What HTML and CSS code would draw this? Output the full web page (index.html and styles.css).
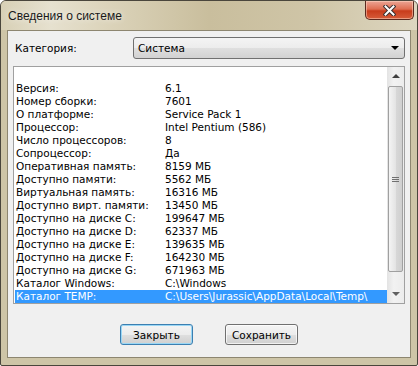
FILE: index.html
```html
<!DOCTYPE html>
<html lang="ru">
<head>
    <meta charset="UTF-8">
    <title>Сведения о системе</title>
    <link rel="stylesheet" href="styles.css">
</head>
<body>
    <div class="window">
        <div class="title-bar">
            <span class="title">Сведения о системе</span>
            <button class="close-button" aria-label="Закрыть">
                <svg width="13" height="11" viewBox="0 0 13 11">
                    <path d="M2.5 1.5 L10.5 9.5 M10.5 1.5 L2.5 9.5" stroke="#3a3030" stroke-width="4" stroke-linecap="square"/>
                    <path d="M2.5 1.5 L10.5 9.5 M10.5 1.5 L2.5 9.5" stroke="#ffffff" stroke-width="2" stroke-linecap="square"/>
                </svg>
            </button>
        </div>

        <div class="client">
            <div class="category-row">
                <label class="category-label">Категория:</label>
                <div class="combo">
                    <span>Система</span>
                    <span class="combo-arrow"></span>
                </div>
            </div>

            <div class="list">
                <div class="list-rows" id="list-rows"></div>
                <div class="scrollbar">
                    <span class="scroll-arrow up"></span>
                    <div class="scroll-thumb"><span class="grip"></span></div>
                    <span class="scroll-arrow down"></span>
                </div>
            </div>

            <div class="buttons">
                <button class="btn default">Закрыть</button>
                <button class="btn">Сохранить</button>
            </div>
        </div>
    </div>

    <script>
        const info = [
            ['Версия:', '6.1'],
            ['Номер сборки:', '7601'],
            ['О платформе:', 'Service Pack 1'],
            ['Процессор:', 'Intel Pentium (586)'],
            ['Число процессоров:', '8'],
            ['Сопроцессор:', 'Да'],
            ['Оперативная память:', '8159 МБ'],
            ['Доступно памяти:', '5562 МБ'],
            ['Виртуальная память:', '16316 МБ'],
            ['Доступно вирт. памяти:', '13450 МБ'],
            ['Доступно на диске C:', '199647 МБ'],
            ['Доступно на диске D:', '62337 МБ'],
            ['Доступно на диске E:', '139635 МБ'],
            ['Доступно на диске F:', '164230 МБ'],
            ['Доступно на диске G:', '671963 МБ'],
            ['Каталог Windows:', 'C:\\Windows'],
            ['Каталог TEMP:', 'C:\\Users\\Jurassic\\AppData\\Local\\Temp\\']
        ];

        const rows = document.getElementById('list-rows');
        info.forEach(([name, value], i) => {
            const row = document.createElement('div');
            row.className = i === info.length - 1 ? 'row selected' : 'row';
            row.innerHTML = `<span class="key">${name}</span><span class="value">${value}</span>`;
            rows.appendChild(row);
        });
    </script>
</body>
</html>
```

FILE: styles.css
```css
* {
    margin: 0;
    padding: 0;
    box-sizing: border-box;
}

body {
    background: #ffffff;
    font-family: 'DejaVu Sans', Verdana, sans-serif;
    font-size: 10.5px;
    color: #000;
}

.window {
    width: 418px;
    height: 366px;
    display: flex;
    flex-direction: column;
    border: 1px solid #4a463c;
    border-radius: 6px 6px 2px 2px;
    background: #cec5a7;
    overflow: hidden;
}

.title-bar {
    height: 29px;
    display: flex;
    align-items: flex-start;
    padding: 0 3px 0 7px;
    background: linear-gradient(to right, #d8d0b6 0%, #e6e1cf 12%, #dcd4bb 25%, #c9be9d 50%, #cfc5a7 75%, #ddd6c0 100%);
}

.title {
    font-family: 'Liberation Sans', Arial, sans-serif;
    font-size: 12px;
    color: #1a1a1a;
    margin-top: 8px;
    text-shadow: 0 0 6px rgba(255, 255, 255, 0.8);
}

.close-button {
    margin-left: auto;
    width: 49px;
    height: 19px;
    border: 1px solid #5a2a20;
    border-top: none;
    border-radius: 0 0 5px 5px;
    background: linear-gradient(to bottom, #eba595 0%, #de6e52 45%, #c83c1c 55%, #d65c3a 100%);
    box-shadow: inset 0 0 0 1px rgba(255, 220, 200, 0.5);
    display: flex;
    align-items: center;
    justify-content: center;
}

.client {
    flex: 1;
    margin: 0 6px 7px 6px;
    border: 1px solid #8d8670;
    background: #f0f0f0;
    padding: 6px 5px 0 5px;
    display: flex;
    flex-direction: column;
}

.category-row {
    height: 22px;
    display: flex;
    align-items: center;
}

.category-label {
    width: 120px;
    padding-left: 2px;
}

.combo {
    flex: 1;
    height: 22px;
    display: flex;
    align-items: center;
    padding: 0 5px 0 4px;
    border: 1px solid #707070;
    border-radius: 3px;
    background: linear-gradient(to bottom, #f4f4f4 0%, #ececec 50%, #dfdfdf 51%, #d2d2d2 100%);
}

.combo-arrow {
    margin-left: auto;
    width: 0;
    height: 0;
    border-left: 4px solid transparent;
    border-right: 4px solid transparent;
    border-top: 4px solid #000;
}

.list {
    margin-top: 7px;
    height: 238px;
    display: flex;
    border: 1px solid #a0a0a0;
    background: #ffffff;
}

.list-rows {
    flex: 1;
    padding: 15px 0 0 1px;
}

.row {
    display: flex;
    height: 13px;
    line-height: 13px;
    padding-left: 1px;
    white-space: nowrap;
}

.row.selected {
    background: #3399ff;
    color: #ffffff;
}

.key {
    width: 149px;
}

.scrollbar {
    width: 17px;
    display: flex;
    flex-direction: column;
    align-items: center;
    background: linear-gradient(to right, #e3e3e3, #f2f2f2 40%, #ececec);
}

.scroll-arrow {
    width: 0;
    height: 0;
    border-left: 4px solid transparent;
    border-right: 4px solid transparent;
    margin: 7px 0;
}

.scroll-arrow.up {
    border-bottom: 4px solid #404040;
}

.scroll-arrow.down {
    border-top: 4px solid #606060;
    margin-top: auto;
}

.scroll-thumb {
    margin-top: 1px;
    width: 15px;
    height: 186px;
    border: 1px solid #a0a0a0;
    border-radius: 2px;
    background: linear-gradient(to right, #f4f4f4, #e4e4e4 50%, #d8d8d8 51%, #cfcfcf);
    display: flex;
    align-items: center;
    justify-content: center;
}

.grip {
    width: 7px;
    height: 5px;
    border-top: 1px solid #707070;
    border-bottom: 1px solid #707070;
    background: linear-gradient(to bottom, transparent 1px, #707070 1px, #707070 2px, transparent 2px);
}

.buttons {
    margin-top: 20px;
    display: flex;
    justify-content: center;
    gap: 32px;
}

.btn {
    width: 73px;
    height: 21px;
    font-family: 'DejaVu Sans', Verdana, sans-serif;
    font-size: 10.5px;
    color: #000;
    border: 1px solid #707070;
    border-radius: 3px;
    background: linear-gradient(to bottom, #f4f4f4 0%, #ececec 50%, #dfdfdf 51%, #d0d0d0 100%);
    box-shadow: inset 0 0 0 1px rgba(255, 255, 255, 0.7);
}

.btn.default {
    border-color: #3c7fb1;
    box-shadow: inset 0 0 0 1px #9ad7f5;
}
```
